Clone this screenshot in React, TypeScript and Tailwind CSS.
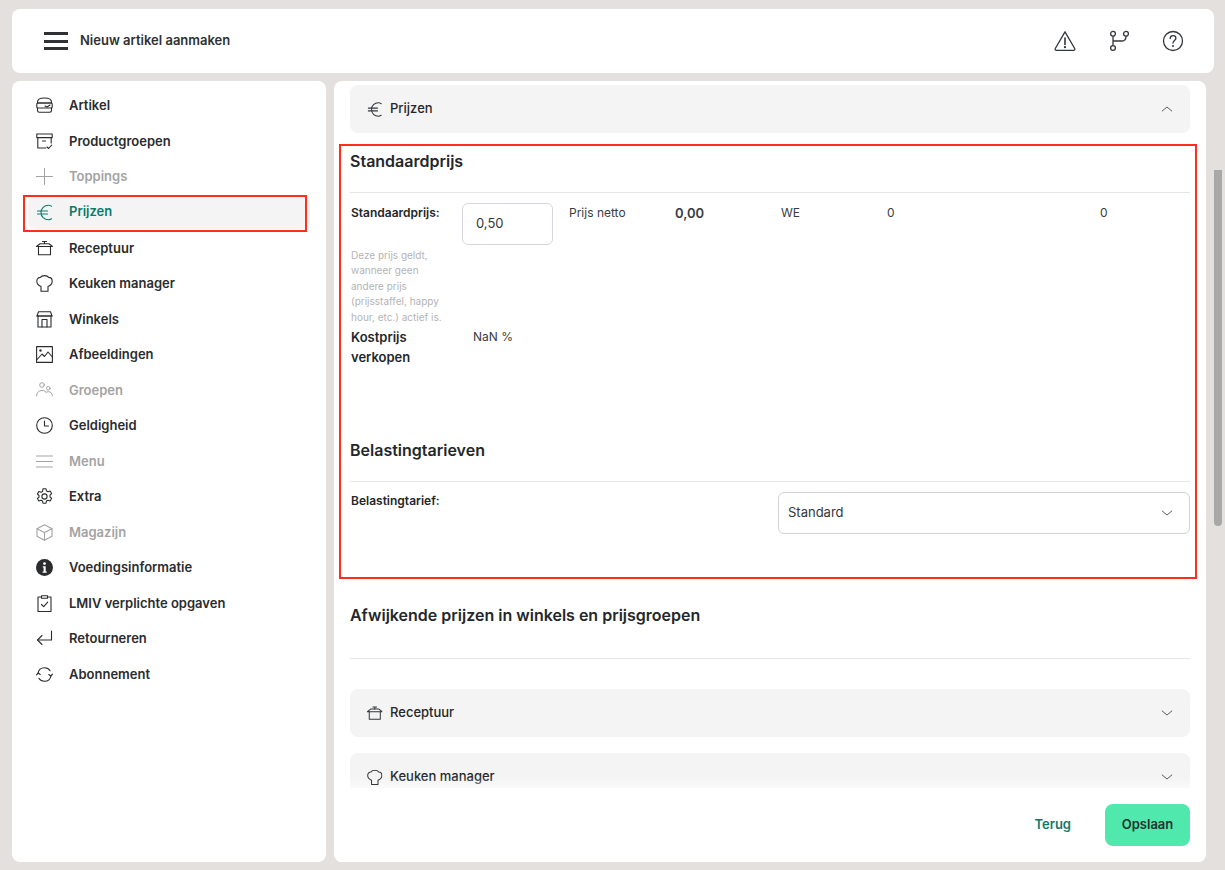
import type { ReactNode } from 'react';
import { ChevronDown, ChevronUp } from 'lucide-react';

const Icon = ({ children, size = 17, stroke = 1.1 }: { children: ReactNode; size?: number; stroke?: number }) => (
  <svg
    viewBox="0 0 17 17"
    width={size}
    height={size}
    fill="none"
    stroke="currentColor"
    strokeWidth={stroke}
    strokeLinecap="round"
    strokeLinejoin="round"
    className="shrink-0"
  >
    {children}
  </svg>
);

const Burger = () => (
  <Icon>
    <path d="M1.5 6V5C1.5 2.5 4 1 8.5 1S15.5 2.5 15.5 5v1z" />
    <rect x="0.8" y="6" width="15.4" height="5" rx="1" />
    <path d="M9 9l2 1 3-2" />
    <path d="M1.5 11v2.5c0 1 .7 1.7 1.7 1.7h10.6c1 0 1.7-.7 1.7-1.7V11" />
  </Icon>
);
const ArchiveCheck = () => (
  <Icon>
    <path d="M.8 1h15.4v3.6H.8z" />
    <path d="M1.8 4.6V15h8M15.2 4.6V10" />
    <path d="M6.5 8h3" />
    <path d="M11 14l1.6 1.5L15.8 12" />
  </Icon>
);
const Plus = () => (
  <Icon stroke={1}>
    <path d="M8.5.5v16M.5 8.5h16" />
  </Icon>
);
const Euro = () => (
  <Icon>
    <path d="M15.5 2.2A7.5 7.5 0 0 0 13 1.2C8 1 5 4.5 5 8.5s3 7.5 8 7.3a7.5 7.5 0 0 0 2.5-1" />
    <path d="M1.5 7h10M1.5 10h10" />
  </Icon>
);
const Pot = () => (
  <Icon>
    <path d="M8.5 1.5v2M6.5 1.5h4" />
    <path d="M.5 6.5 4 3.7h9l3.5 2.8z" />
    <path d="M2.5 6.5v8.3h12V6.5" />
  </Icon>
);
const Chef = () => (
  <Icon>
    <path d="M5 11.5C2.5 10.5.8 8.8.8 6.3.8 3.8 2.5 2.4 4.3 2.4 5.2 1.2 6.6.6 8.5.6s3.300.6 4.200 1.800c1.800 0 3.500 1.400 3.500 3.900 0 2.500-1.700 4.200-4.200 5.200v4.700H5z" />
  </Icon>
);
const Store = () => (
  <Icon>
    <path d="M1 5 2.500.8h12L16 5z" />
    <path d="M1 5h15" />
    <path d="M2 5v11h13V5" />
    <path d="M6 16V8.500h5V16" />
  </Icon>
);
const ImageIcon = () => (
  <Icon>
    <rect x=".6" y=".6" width="15.800" height="15.800" />
    <path d="M.6 14 6 8l2.500 2.500L12 6l4.400 5" />
    <circle cx="4.500" cy="4.500" r=".7" />
  </Icon>
);
const Users = () => (
  <Icon stroke={1}>
    <circle cx="6" cy="3" r="2.300" />
    <circle cx="12.300" cy="6.300" r="1.800" />
    <path d="M.6 14c0-3.500 2.200-5.500 5.400-5.500 1.500 0 2.700.4 3.500 1.100" />
    <path d="M10 10.400c.7-.5 1.500-.7 2.300-.7 2.400 0 4.100 1.700 4.100 4.300" />
  </Icon>
);
const Clock = () => (
  <Icon>
    <circle cx="8.500" cy="8.500" r="7.800" />
    <path d="M8.500 4v5h4" />
  </Icon>
);
const MenuLines = () => (
  <Icon stroke={1}>
    <path d="M.5 3h16M.5 8.500h16M.5 14h16" />
  </Icon>
);
const Gear = () => (
  <Icon>
    <circle cx="8.500" cy="8.500" r="2.600" />
    <path d="M7 .8h3l.5 2.200 1.500.8 2.100-.8 1.500 2.600-1.600 1.500v1.800l1.600 1.500-1.500 2.600-2.100-.8-1.500.8-.5 2.200H7l-.5-2.200-1.500-.8-2.100.8-1.500-2.600L3 9.300V7.500L1.400 6l1.500-2.600 2.100.8 1.500-.8z" />
  </Icon>
);
const Cube = () => (
  <Icon>
    <path d="M8.500.8 16 4.700v7.600l-7.500 3.900L1 12.300V4.700z" />
    <path d="M1 4.700l7.500 3.900L16 4.700M8.500 8.600v7.600" />
  </Icon>
);
const InfoFilled = () => (
  <svg viewBox="0 0 17 17" width={17} height={17} className="shrink-0">
    <circle cx="8.500" cy="8.500" r="8.500" fill="currentColor" />
    <circle cx="8.500" cy="4.600" r="1.400" fill="#fff" />
    <path d="M6.800 7.200h2.900v5.200h1v1.300H6.600v-1.300h1V8.500h-.8z" fill="#fff" />
  </svg>
);
const ClipboardCheck = () => (
  <Icon>
    <path d="M5.500 2H2v14.500h13V2h-3.500" />
    <path d="M5.500.8h6v2.500h-6z" />
    <path d="M5.500 9.500l2.200 2.200 4-4.500" />
  </Icon>
);
const ReturnArrow = () => (
  <Icon>
    <path d="M15.500 1v9H1.500" />
    <path d="M6 5.500 1.500 10 6 14.500" />
  </Icon>
);
const Refresh = () => (
  <Icon>
    <path d="M2 7.500C2.500 4 5.200 1.700 8.500 1.700c2.400 0 4.500 1.200 5.600 3" />
    <path d="M15 9.500c-.5 3.500-3.200 5.800-6.500 5.800-2.400 0-4.500-1.200-5.600-3" />
    <path d="M.5 8.800 2.200 7l2 1.500M16.500 8.200 14.800 10l-2-1.500" />
  </Icon>
);

const navItems: { label: string; icon: ReactNode; muted?: boolean; active?: boolean }[] = [
  { label: 'Artikel', icon: <Burger /> },
  { label: 'Productgroepen', icon: <ArchiveCheck /> },
  { label: 'Toppings', icon: <Plus />, muted: true },
  { label: 'Prijzen', icon: <Euro />, active: true },
  { label: 'Receptuur', icon: <Pot /> },
  { label: 'Keuken manager', icon: <Chef /> },
  { label: 'Winkels', icon: <Store /> },
  { label: 'Afbeeldingen', icon: <ImageIcon /> },
  { label: 'Groepen', icon: <Users />, muted: true },
  { label: 'Geldigheid', icon: <Clock /> },
  { label: 'Menu', icon: <MenuLines />, muted: true },
  { label: 'Extra', icon: <Gear /> },
  { label: 'Magazijn', icon: <Cube />, muted: true },
  { label: 'Voedingsinformatie', icon: <InfoFilled /> },
  { label: 'LMIV verplichte opgaven', icon: <ClipboardCheck /> },
  { label: 'Retourneren', icon: <ReturnArrow /> },
  { label: 'Abonnement', icon: <Refresh /> },
];

const Accordion = ({ label, icon, open }: { label: string; icon: ReactNode; open?: boolean }) => (
  <div className="flex h-12 shrink-0 items-center rounded-lg bg-[#f4f4f4] pl-4 pr-[15px] text-[13px] font-medium text-[#24272a]">
    <span className="flex w-[24px] shrink-0 scale-[0.92] justify-start text-[#33363a]">{icon}</span>
    <span className="ml-[0px]">{label}</span>
    <span className="ml-auto text-[#33363a]">
      {open ? <ChevronUp size={16} strokeWidth={1.1} className="scale-x-[1.2]" /> : <ChevronDown size={16} strokeWidth={1.1} className="scale-x-[1.2]" />}
    </span>
  </div>
);

export default function App() {
  return (
    <div className="relative flex h-[870px] w-[1225px] flex-col gap-2 overflow-hidden bg-[#e3e0de] pb-2 pl-3 pr-[11px] pt-[9px] font-['Inter',sans-serif] text-[#24272a]">
      {/* Top bar */}
      <header className="flex h-16 shrink-0 items-center rounded-lg bg-white pl-8 pr-[30px]">
        <div className="flex w-6 flex-col gap-[4.5px]">
          <span className="h-[3px] bg-[#2f3133]" />
          <span className="h-[3px] bg-[#2f3133]" />
          <span className="h-[3px] bg-[#2f3133]" />
        </div>
        <span className="ml-3 text-[13px] font-semibold text-[#2f3133]">Nieuw artikel aanmaken</span>
        <div className="ml-auto flex items-center gap-[32px] text-[#33363a]">
          <svg viewBox="0 0 22 22" width={22} height={22} fill="none" stroke="currentColor" strokeWidth={1.3} strokeLinejoin="round" strokeLinecap="round">
            <path d="M11 1.800 1.300 18.500c-.5 1 .1 1.800 1 1.800h17.400c.9 0 1.500-.8 1-1.800z" />
            <path d="M11 8v6.500" strokeWidth={1.6} />
            <circle cx="11" cy="17.200" r=".5" fill="currentColor" />
          </svg>
          <svg viewBox="0 0 22 22" width={22} height={22} fill="none" stroke="currentColor" strokeWidth={1.3}>
            <circle cx="5" cy="3.800" r="2.400" />
            <circle cx="5" cy="18" r="2.400" />
            <circle cx="18" cy="3.800" r="2.400" />
            <path d="M5 6.200v9.400M5 11h9c2.500 0 4-1.500 4-4.800" />
          </svg>
          <svg viewBox="0 0 22 22" width={22} height={22} fill="none" stroke="currentColor" strokeWidth={1.3} strokeLinecap="round">
            <circle cx="11" cy="11" r="9.500" />
            <path d="M8.200 8.500c0-1.700 1.200-2.800 2.900-2.800s2.800 1.100 2.800 2.500c0 2.200-2.900 2.400-2.900 4.800" />
            <circle cx="11" cy="16" r=".4" fill="currentColor" />
          </svg>
        </div>
      </header>

      <div className="flex min-h-0 flex-1 gap-2">
        {/* Sidebar */}
        <nav className="flex w-[314px] shrink-0 flex-col rounded-lg bg-white pl-4 pr-4 pt-[7px]">
          {navItems.map((item) => (
            <div
              key={item.label}
              className={
                item.active
                  ? 'mb-[2px] mt-[1px] flex h-[33px] w-[282px] items-center rounded-lg bg-[#f4f4f4] pl-2 text-[13px] font-semibold text-[#0d7a68]'
                  : `flex h-[35.5px] items-center pl-2 text-[13px] font-semibold ${item.muted ? 'text-[#a3a3a3]' : 'text-[#2a2c2e]'}`
              }
            >
              {item.icon}
              <span className="ml-4">{item.label}</span>
            </div>
          ))}
        </nav>

        {/* Main panel */}
        <main className="flex min-w-0 w-[872px] shrink-0 flex-col overflow-hidden rounded-lg bg-white">
          <div className="flex min-h-0 flex-1 flex-col overflow-hidden pl-4 pr-4 pt-1">
            <Accordion label="Prijzen" icon={<Euro />} open />

            <h2 className="mt-[17px] text-base font-semibold leading-[22px]">Standaardprijs</h2>
            <div className="mt-[20px] border-t border-[#e6e6e6]" />
            <div className="mt-[10px] flex">
              <div className="w-[112px] shrink-0 pl-px">
                <div className="pt-[1px] text-xs font-semibold leading-[18px]">Standaardprijs:</div>
                <p className="mt-[26px] w-[100px] text-[10px] leading-[15.4px] text-[#b4b4b4]">
                  Deze prijs geldt, wanneer geen andere prijs (prijsstaffel, happy hour, etc.) actief is.
                </p>
              </div>
              <div className="w-[107px] shrink-0">
                <div className="flex h-[42px] w-[91px] items-center rounded-md border border-[#d3d6da] pl-[13px] text-[13px] text-[#33363a]">
                  0,50
                </div>
              </div>
              <div className="w-[106px] shrink-0 pt-px text-xs leading-[18px] text-[#3a3c3f]">Prijs netto</div>
              <div className="w-[106px] shrink-0 pt-px text-[13px] font-semibold leading-[18px] text-[#3a3c3f]">0,00</div>
              <div className="w-[106px] shrink-0 pt-px text-xs leading-[18px] text-[#3a3c3f]">WE</div>
              <div className="w-[213px] shrink-0 pt-px text-xs leading-[18px] text-[#3a3c3f]">0</div>
              <div className="pt-px text-xs leading-[18px] text-[#3a3c3f]">0</div>
            </div>
            <div className="mt-[2px] flex">
              <div className="w-[123px] shrink-0 pl-px text-[13px] font-semibold leading-[20px]">
                Kostprijs
                <br />
                verkopen
              </div>
              <div className="text-xs leading-[20px] text-[#3a3c3f]">NaN %</div>
            </div>

            <h2 className="mt-[72px] text-base font-semibold leading-[22px]">Belastingtarieven</h2>
            <div className="mt-[20px] border-t border-[#e6e6e6]" />
            <div className="mt-[10px] flex items-start justify-between">
              <div className="pl-px text-xs font-semibold leading-[18px]">Belastingtarief:</div>
              <div className="flex h-[42px] w-[412px] items-center justify-between rounded-md border border-[#d3d3d3] pl-[9px] pr-[14px] text-[13px] text-[#33363a]">
                Standard
                <ChevronDown size={16} strokeWidth={1.1} className="scale-x-[1.2]" />
              </div>
            </div>

            <h2 className="mt-[70px] text-base font-semibold leading-[22px]">Afwijkende prijzen in winkels en prijsgroepen</h2>
            <div className="mt-[32px] border-t border-[#e6e6e6]" />
            <div className="mt-[30px] flex flex-col gap-4">
              <Accordion label="Receptuur" icon={<Pot />} />
              <Accordion label="Keuken manager" icon={<Chef />} />
            </div>
          </div>

          {/* Footer */}
          <div className="flex h-[74px] shrink-0 items-center justify-end bg-white pr-4 shadow-[0_-4px_8px_rgba(255,255,255,0.7)]">
            <span className="mr-[34px] text-[13px] font-semibold text-[#0d7a68]">Terug</span>
            <button className="h-[42px] w-[85px] rounded-lg bg-[#50e8ad] text-[13px] font-semibold text-[#24332f]">Opslaan</button>
          </div>
        </main>

        {/* Scrollbar */}
        <div className="relative w-2 shrink-0">
          <div className="absolute left-0 top-[89px] h-[356px] w-2 rounded-b-lg bg-[#a8a8a8]" />
        </div>
      </div>

      {/* Red annotation frames */}
      <div className="pointer-events-none absolute left-[23px] top-[195px] h-[37px] w-[284px] border-2 border-[#ff2d1a]" />
      <div className="pointer-events-none absolute left-[339px] top-[144px] h-[435px] w-[858px] border-2 border-[#ff2d1a]" />
    </div>
  );
}
